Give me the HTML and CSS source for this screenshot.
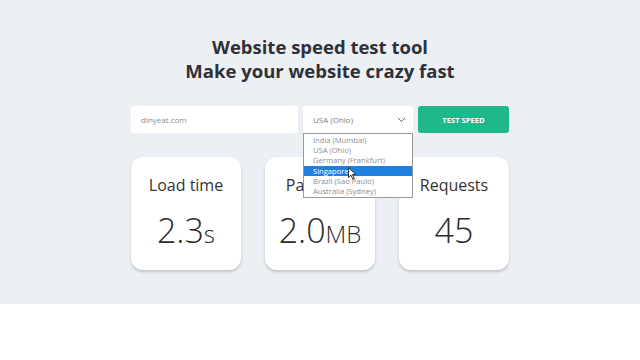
FILE: index.html
```html
<!DOCTYPE html>
<html lang="en">

<head>
    <meta charset="UTF-8">
    <meta name="viewport" content="width=device-width, initial-scale=1">
    <title>Website speed test tool</title>
    <link rel="stylesheet" href="styles.css">
</head>

<body>
    <div class="hero">
        <div class="container">
            <h1>Website speed test tool<br>Make your website crazy fast</h1>

            <div class="form-row">
                <input type="text" class="url-input" placeholder="dinyeat.com">
                <div class="select-wrap">
                    <div class="select-box">
                        <span>USA (Ohio)</span>
                        <svg class="chevron" width="9" height="6" viewBox="0 0 9 6">
                            <path d="M1 1l3.5 3.5L8 1" fill="none" stroke="#666" stroke-width="1"/>
                        </svg>
                    </div>
                    <ul class="options">
                        <li>India (Mumbai)</li>
                        <li>USA (Ohio)</li>
                        <li>Germany (Frankfurt)</li>
                        <li class="active">Singapore</li>
                        <li>Brazil (Sao Paulo)</li>
                        <li>Australia (Sydney)</li>
                    </ul>
                    <!-- mouse pointer -->
                    <svg class="cursor" width="9" height="13" viewBox="0 0 9 13">
                        <path d="M0.5 0.5v10l2.5-2.3 1.8 4 1.5-0.7-1.8-3.9h3.4z" fill="#fff" stroke="#222" stroke-width="0.9"/>
                    </svg>
                </div>
                <button class="test-btn">TEST SPEED</button>
            </div>

            <div class="cards">
                <div class="card">
                    <div class="card-label">Load time</div>
                    <div class="card-value">2.3<small>s</small></div>
                </div>
                <div class="card">
                    <div class="card-label">Page size</div>
                    <div class="card-value">2.0<small>MB</small></div>
                </div>
                <div class="card">
                    <div class="card-label">Requests</div>
                    <div class="card-value">45</div>
                </div>
            </div>
        </div>
    </div>
</body>

</html>
```

FILE: styles.css
```css
body {
    margin: 0;
    font-family: "Open Sans", "Noto Sans", sans-serif;
    background-color: #fff;
    color: #333;
}

.hero {
    background-color: #eceff4;
    height: 304px;
    padding-top: 35px;
    box-sizing: border-box;
}

.container {
    width: 378px;
    margin: 0 auto;
}

h1 {
    margin: 0;
    font-size: 18.5px;
    line-height: 24px;
    font-weight: 700;
    text-align: center;
    color: #2f3136;
}

.form-row {
    display: flex;
    gap: 5px;
    margin-top: 23px;
    height: 27px;
}

.url-input {
    width: 167px;
    border: none;
    border-radius: 2px;
    background-color: #fff;
    padding: 0 10px;
    box-sizing: border-box;
    font-family: inherit;
    font-size: 8px;
    color: #555;
    outline: none;
}

.url-input::placeholder {
    color: #8a8d93;
}

.select-wrap {
    position: relative;
    width: 110px;
}

.select-box {
    height: 100%;
    background-color: #fff;
    border-radius: 2px;
    display: flex;
    align-items: center;
    justify-content: space-between;
    padding: 0 7px 0 10px;
    font-size: 8px;
    color: #7b7e84;
}

.options {
    position: absolute;
    top: 27px;
    left: 0;
    width: 110px;
    margin: 0;
    padding: 1px 0 1px;
    list-style: none;
    background-color: #fff;
    border: 1px solid #9a9a9a;
    box-sizing: border-box;
    z-index: 2;
}

.options li {
    height: 10.2px;
    line-height: 10.2px;
    padding-left: 9px;
    font-size: 7.6px;
    color: #8b8e93;
}

.options li.active {
    background-color: #1e7fe0;
    color: #fff;
}

.cursor {
    position: absolute;
    left: 45px;
    top: 61px;
    z-index: 3;
}

.test-btn {
    width: 91px;
    border: none;
    border-radius: 3px;
    background-color: #1fb88b;
    color: #fff;
    font-family: inherit;
    font-size: 7.6px;
    font-weight: 700;
    cursor: pointer;
}

.cards {
    display: flex;
    gap: 24px;
    margin-top: 24px;
}

.card {
    width: 110px;
    height: 113px;
    background-color: #fff;
    border-radius: 12px;
    box-shadow: 0 2px 3px rgba(0, 0, 0, 0.18);
    text-align: center;
    box-sizing: border-box;
    padding-top: 17px;
}

.card-label {
    font-size: 16px;
    line-height: 22px;
    color: #333;
}

.card-value {
    margin-top: 14px;
    font-size: 34px;
    line-height: 40px;
    font-weight: 300;
    color: #2b2b2b;
}

.card-value small {
    font-size: 24px;
}
```
